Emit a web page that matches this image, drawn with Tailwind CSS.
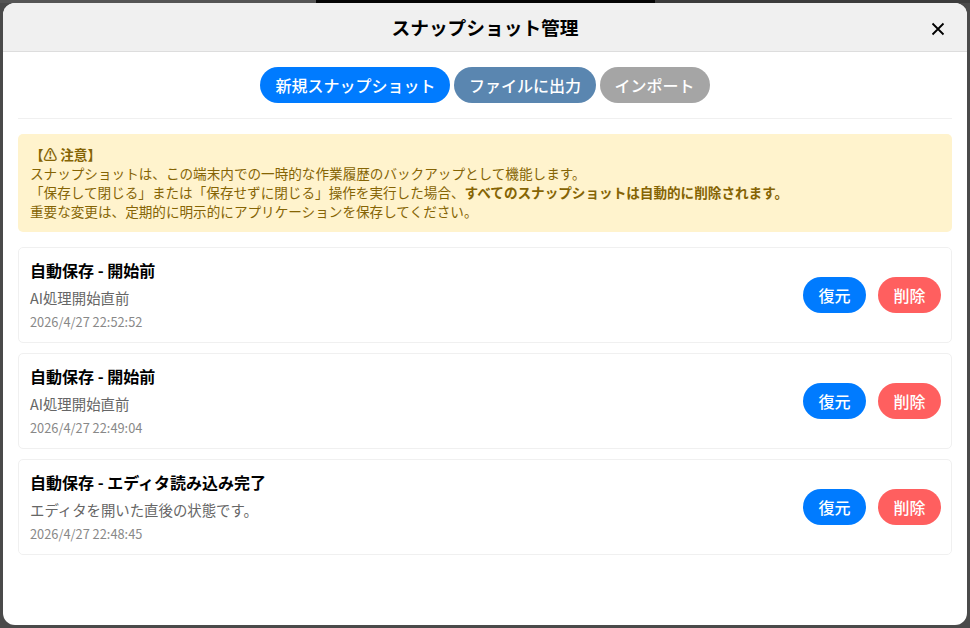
<!DOCTYPE html>
<html lang="ja">

<head>
  <title>スナップショット管理</title>
  <script src="https://cdn.jsdelivr.net/npm/@tailwindcss/browser@4"></script>
</head>

<body class="w-[970px] h-[628px] overflow-hidden bg-[#4a4a4a] font-['Noto_Sans_CJK_JP',sans-serif]">
  <div class="flex h-[3px]">
    <div class="w-[316px] bg-[#555555]"></div>
    <div class="w-[339px] bg-[#050505]"></div>
    <div class="flex-1 bg-[#3c3c3c]"></div>
  </div>
  <!-- modal -->
  <div class="w-[964px] h-[622px] ml-[3px] bg-white rounded-[12px] overflow-hidden flex flex-col">
    <header class="relative h-[49px] shrink-0 flex items-center justify-center pt-[1px] bg-[#f0f0f0] border-b border-[#dddddd]">
      <h2 class="text-[18.72px] font-bold text-black">スナップショット管理</h2>
      <button class="absolute right-[22px] top-[19px] w-[14px] h-[14px] flex items-center justify-center text-black">
        <svg class="w-[14px] h-[14px]" viewBox="0 0 14 14" fill="none" stroke="currentColor" stroke-width="1.8">
          <path d="M1.5 1.5l11 11M12.5 1.5l-11 11"></path>
        </svg>
      </button>
    </header>
    <div class="flex-1 px-[15px] pt-[15px]">
      <div class="flex justify-center gap-[3.5px] pb-[15px] border-b border-[#f0f0f0]">
        <button class="h-[36px] px-[15px] rounded-[18px] bg-[#007bff] text-white text-[16px] font-medium">新規スナップショット</button>
        <button class="h-[36px] px-[15px] rounded-[18px] bg-[#5a86b0] text-white text-[16px] font-medium">ファイルに出力</button>
        <button class="h-[36px] px-[15px] rounded-[18px] bg-[#a5a5a5] text-white text-[16px] font-medium">インポート</button>
      </div>
      <div class="mt-[15px] px-[12px] py-[11px] rounded-[5px] bg-[#fff3cd] text-[#856404] text-[13.6px] leading-[19px]">
        <strong class="font-bold">【⚠ 注意】</strong><br>
        スナップショットは、この端末内での一時的な作業履歴のバックアップとして機能します。<br>
        「保存して閉じる」または「保存せずに閉じる」操作を実行した場合、<strong class="font-bold">すべてのスナップショットは自動的に削除されます。</strong><br>
        重要な変更は、定期的に明示的にアプリケーションを保存してください。
      </div>
      <ul class="mt-[15px] flex flex-col gap-[10px]">
        <li class="h-[96px] pl-[11px] pr-[10px] flex items-center justify-between border border-[#f0f0f0] rounded-[5px]">
          <div>
            <div class="text-[16px] leading-[22px] font-bold text-black">自動保存 - 開始前</div>
            <div class="mt-[6px] text-[14.4px] leading-[22px] text-[#666666]">AI処理開始直前</div>
            <div class="mt-[4px] text-[12.8px] leading-[18px] text-[#888888]">2026/4/27 22:52:52</div>
          </div>
          <div class="flex gap-[12px]">
            <button class="h-[36px] w-[63px] rounded-[18px] bg-[#007bff] text-white text-[16px] font-medium">復元</button>
            <button class="h-[36px] w-[63px] rounded-[18px] bg-[#ff5f5f] text-white text-[16px] font-medium">削除</button>
          </div>
        </li>
        <li class="h-[96px] pl-[11px] pr-[10px] flex items-center justify-between border border-[#f0f0f0] rounded-[5px]">
          <div>
            <div class="text-[16px] leading-[22px] font-bold text-black">自動保存 - 開始前</div>
            <div class="mt-[6px] text-[14.4px] leading-[22px] text-[#666666]">AI処理開始直前</div>
            <div class="mt-[4px] text-[12.8px] leading-[18px] text-[#888888]">2026/4/27 22:49:04</div>
          </div>
          <div class="flex gap-[12px]">
            <button class="h-[36px] w-[63px] rounded-[18px] bg-[#007bff] text-white text-[16px] font-medium">復元</button>
            <button class="h-[36px] w-[63px] rounded-[18px] bg-[#ff5f5f] text-white text-[16px] font-medium">削除</button>
          </div>
        </li>
        <li class="h-[96px] pl-[11px] pr-[10px] flex items-center justify-between border border-[#f0f0f0] rounded-[5px]">
          <div>
            <div class="text-[16px] leading-[22px] font-bold text-black">自動保存 - エディタ読み込み完了</div>
            <div class="mt-[6px] text-[14.4px] leading-[22px] text-[#666666]">エディタを開いた直後の状態です。</div>
            <div class="mt-[4px] text-[12.8px] leading-[18px] text-[#888888]">2026/4/27 22:48:45</div>
          </div>
          <div class="flex gap-[12px]">
            <button class="h-[36px] w-[63px] rounded-[18px] bg-[#007bff] text-white text-[16px] font-medium">復元</button>
            <button class="h-[36px] w-[63px] rounded-[18px] bg-[#ff5f5f] text-white text-[16px] font-medium">削除</button>
          </div>
        </li>
      </ul>
    </div>
  </div>
</body>

</html>
